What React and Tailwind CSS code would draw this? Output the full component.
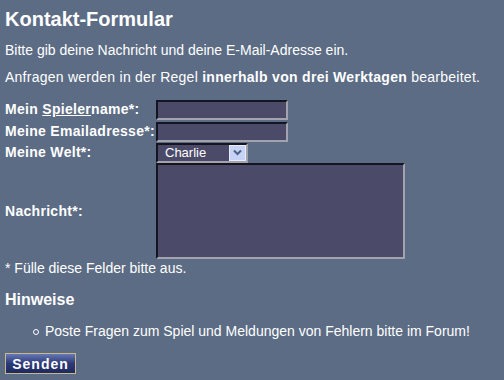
import React from "react";

const inputCls =
  "h-[20px] bg-[#4b4a68] border-2 border-t-[#15151f] border-l-[#15151f] border-b-[#a3a3ad] border-r-[#a3a3ad] text-white text-[14px] px-1 outline-none";

const App = () => {
  return (
    <div className="w-[504px] h-[380px] overflow-hidden bg-[#5c6c85] text-white font-['Liberation_Sans',Arial,sans-serif] px-[5px] pt-[7px]">
      <h1 className="text-[20px] font-bold leading-[24px]">Kontakt-Formular</h1>
      <p className="text-[14px] leading-[17px] mt-[11px]">
        Bitte gib deine Nachricht und deine E-Mail-Adresse ein.
      </p>
      <p className="text-[14px] leading-[17px] mt-[10px] tracking-[0.25px]">
        Anfragen werden in der Regel <b className="tracking-[0.3px]">innerhalb von drei Werktagen</b> bearbeitet.
      </p>

      <form className="mt-[13px] text-[14px] font-bold tracking-[0.3px]">
        <div className="flex items-center h-[21px]">
          <label className="w-[151px] whitespace-nowrap">
            Mein <span className="underline">Spieler</span>name*:
          </label>
          <input type="text" className={`${inputCls} w-[132px]`} />
        </div>
        <div className="flex items-center h-[21px] mt-[1px]">
          <label className="w-[151px] whitespace-nowrap">Meine Emailadresse*:</label>
          <input type="text" className={`${inputCls} w-[132px]`} />
        </div>
        <div className="flex items-center h-[21px]">
          <label className="w-[151px]">Meine Welt*:</label>
          <div className={`${inputCls} w-[92px] flex items-center justify-between pr-0 font-normal tracking-normal`}>
            <span className="pl-[3px] text-[13px]">Charlie</span>
            <span className="w-[17px] h-[16px] bg-[#c6d3f7] border border-[#e8eefc] flex items-center justify-center">
              <svg width="9" height="7" viewBox="0 0 9 7">
                <path d="M1 1.5 L4.5 5 L8 1.5" stroke="#4d6185" strokeWidth="2" fill="none" />
              </svg>
            </span>
          </div>
        </div>
        <div className="flex items-center">
          <label className="w-[151px]">Nachricht*:</label>
          <textarea className="w-[249px] h-[96px] bg-[#4b4a68] border-2 border-t-[#15151f] border-l-[#15151f] border-b-[#a3a3ad] border-r-[#a3a3ad] resize-none outline-none" />
        </div>
      </form>

      <p className="text-[14px] leading-[17px] mt-[1px]">* Fülle diese Felder bitte aus.</p>

      <h2 className="text-[16px] font-bold leading-[20px] mt-[13px]">Hinweise</h2>
      <ul className="mt-[13px] text-[14px] leading-[17px]">
        <li className="flex items-center pl-[28px]">
          <span className="w-[6px] h-[6px] rounded-full border border-white mr-[6px]"></span>
          Poste Fragen zum Spiel und Meldungen von Fehlern bitte im Forum!
        </li>
      </ul>

      <button
        type="button"
        className="mt-[13px] w-[71px] h-[21px] border border-[#c9b98a] bg-gradient-to-b from-[#6878b4] via-[#2c3a78] to-[#1e2a60] text-white text-[14px] font-bold tracking-[1px] leading-none"
      >
        Senden
      </button>
    </div>
  );
};

export default App;
